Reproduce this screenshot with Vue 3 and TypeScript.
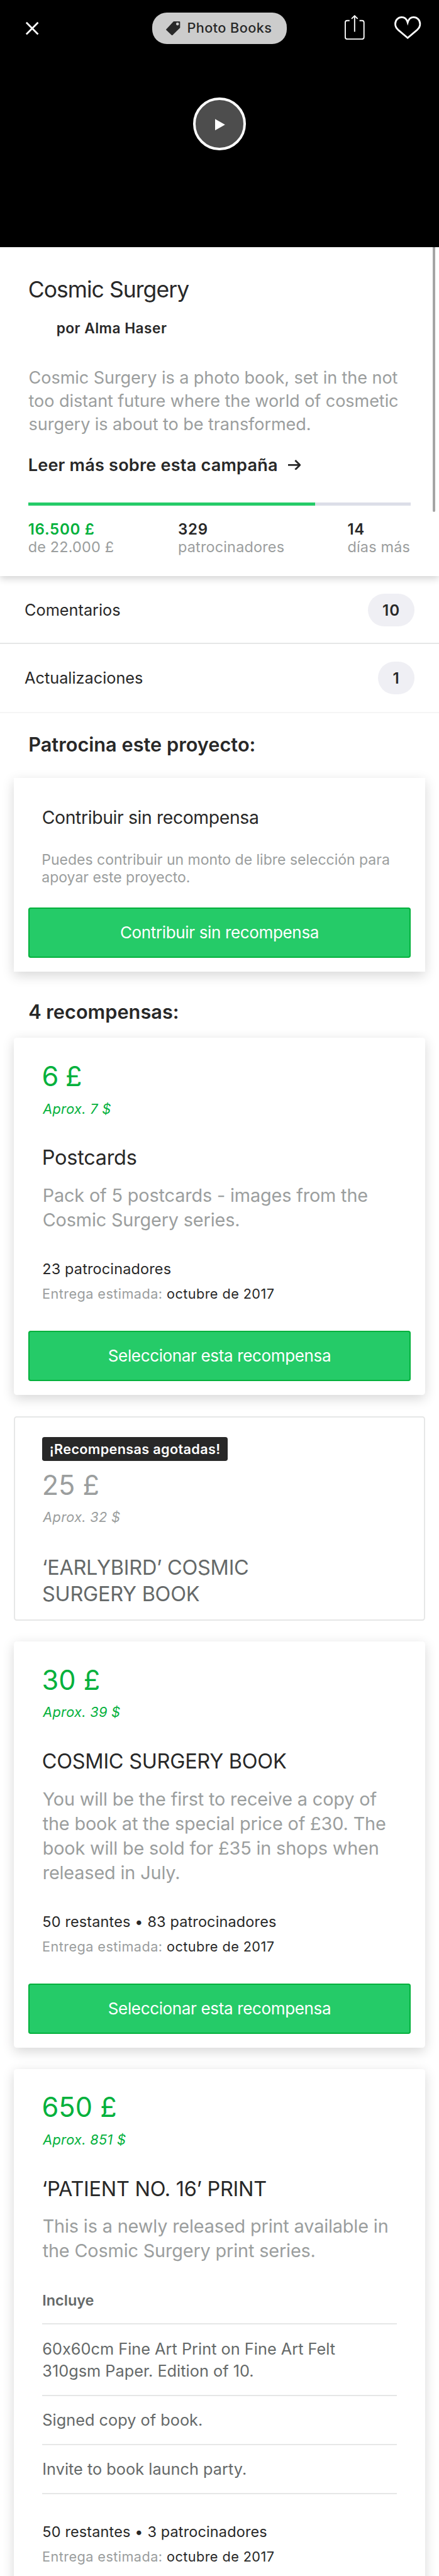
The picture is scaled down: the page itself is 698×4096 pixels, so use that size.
<script setup lang="ts">
interface Reward {
  id: string
  price: string
  approx: string
  title: string[]
  description?: string[]
  includes?: string[][]
  supporters?: string
  delivery?: string
  soldOut?: boolean
  selectable?: boolean
}

const stats = [
  { id: 'pledged', value: '16.500 £', label: 'de 22.000 £' },
  { id: 'count', value: '329', label: 'patrocinadores' },
  { id: 'days', value: '14', label: 'días más' },
]

const progress = 75

const blurb = [
  'Cosmic Surgery is a photo book, set in the not',
  'too distant future where the world of cosmetic',
  'surgery is about to be transformed.',
]

const links = [
  { label: 'Comentarios', count: 10 },
  { label: 'Actualizaciones', count: 1 },
]

const rewards: Reward[] = [
  {
    id: 'postcards',
    price: '6 £',
    approx: 'Aprox. 7 $',
    title: ['Postcards'],
    description: ['Pack of 5 postcards - images from the', 'Cosmic Surgery series.'],
    supporters: '23 patrocinadores',
    delivery: 'octubre de 2017',
    selectable: true,
  },
  {
    id: 'earlybird',
    price: '25 £',
    approx: 'Aprox. 32 $',
    title: ['‘EARLYBIRD’ COSMIC', 'SURGERY BOOK'],
    soldOut: true,
  },
  {
    id: 'book',
    price: '30 £',
    approx: 'Aprox. 39 $',
    title: ['COSMIC SURGERY BOOK'],
    description: [
      'You will be the first to receive a copy of',
      'the book at the special price of £30. The',
      'book will be sold for £35 in shops when',
      'released in July.',
    ],
    supporters: '50 restantes • 83 patrocinadores',
    delivery: 'octubre de 2017',
    selectable: true,
  },
  {
    id: 'print',
    price: '650 £',
    approx: 'Aprox. 851 $',
    title: ['‘PATIENT NO. 16’ PRINT'],
    description: ['This is a newly released print available in', 'the Cosmic Surgery print series.'],
    includes: [
      ['60x60cm Fine Art Print on Fine Art Felt', '310gsm Paper. Edition of 10.'],
      ['Signed copy of book.'],
      ['Invite to book launch party.'],
    ],
    supporters: '50 restantes • 3 patrocinadores',
    delivery: 'octubre de 2017',
  },
]
</script>

<template>
  <main class="page">
    <header class="hero">
      <nav class="toolbar">
        <button class="icon-btn" aria-label="Cerrar">
          <svg class="close" viewBox="0 0 24 24"><path d="M2 2 22 22M22 2 2 22" /></svg>
        </button>
        <span class="pill">
          <svg class="tag" viewBox="0 0 24 24">
            <path
              fill-rule="evenodd"
              d="M12.6.4Q13 0 13.6 0H23q1 0 1 1v9.4q0 .6-.4 1L11 23.6q-.6.7-1.3 0L.4 14.9q-.8-.8 0-1.5ZM19.6 1.9a2.5 2.5 0 1 0 0 5 2.5 2.5 0 0 0 0-5Z"
            />
          </svg>
          <span class="pill-text">Photo Books</span>
        </span>
        <div class="actions">
          <button class="icon-btn" aria-label="Compartir">
            <svg class="share" viewBox="0 0 34 42">
              <path d="M8.4 9.4H4.2Q1 9.4 1 12.6V37.6Q1 41 4.4 41H29.6Q33 41 33 37.6V12.6Q33 9.4 29.8 9.4H25.4" />
              <path d="M17 28.4V1.2M11.8 6.4 17 1.2 22.2 6.4" />
            </svg>
          </button>
          <button class="icon-btn" aria-label="Guardar">
            <svg class="heart" viewBox="0 0 46 39">
              <path d="M23 10.6C21.2 4.4 17.6 1.6 12.8 1.6 6.4 1.6 1.6 6.4 1.6 13.2 1.6 17.4 3.4 20.3 6.4 23.2L23 37.2 39.6 23.2C42.6 20.3 44.4 17.4 44.4 13.2 44.4 6.4 39.6 1.6 33.2 1.6 28.4 1.6 24.8 4.4 23 10.6Z" />
            </svg>
          </button>
        </div>
      </nav>
      <button class="play" aria-label="Reproducir">
        <svg viewBox="0 0 18 20"><path d="M0 0 17.5 10 0 20Z" /></svg>
      </button>
    </header>

    <div class="scrollbar"></div>

    <section class="summary">
      <h1>Cosmic Surgery</h1>
      <p class="author">por Alma Haser</p>
      <p class="blurb">
        <span v-for="line in blurb" :key="line" class="line">{{ line }}</span>
      </p>
      <a class="more">
        <span>Leer más sobre esta campaña</span>
        <svg viewBox="0 0 22 18"><path d="M0 9H20M12.2 1 20.2 9 12.2 17" /></svg>
      </a>
      <div class="progress"><div class="progress-fill" :style="{ width: progress + '%' }"></div></div>
      <dl class="stats">
        <div v-for="s in stats" :key="s.id" :class="s.id">
          <dt>{{ s.value }}</dt>
          <dd>{{ s.label }}</dd>
        </div>
      </dl>
    </section>

    <ul class="links">
      <li v-for="l in links" :key="l.label">
        <span>{{ l.label }}</span>
        <b>{{ l.count }}</b>
      </li>
    </ul>

    <h2 class="back-heading">Patrocina este proyecto:</h2>
    <section class="card no-reward">
      <h3>Contribuir sin recompensa</h3>
      <p>
        <span class="line">Puedes contribuir un monto de libre selección para</span>
        <span class="line">apoyar este proyecto.</span>
      </p>
      <button class="cta">Contribuir sin recompensa</button>
    </section>

    <h2 class="rewards-heading">4 recompensas:</h2>
    <div class="rewards">
      <article v-for="r in rewards" :key="r.id" :class="['card', 'reward', r.id, { 'sold-out': r.soldOut }]">
        <span v-if="r.soldOut" class="flag">¡Recompensas agotadas!</span>
        <p class="price">{{ r.price }}</p>
        <p class="approx">{{ r.approx }}</p>
        <h3 class="title">
          <span v-for="line in r.title" :key="line" class="line">{{ line }}</span>
        </h3>
        <p v-if="r.description" class="desc">
          <span v-for="line in r.description" :key="line" class="line">{{ line }}</span>
        </p>
        <div v-if="r.includes" class="includes">
          <h4>Incluye</h4>
          <ul>
            <li v-for="(item, i) in r.includes" :key="i">
              <span v-for="line in item" :key="line" class="line">{{ line }}</span>
            </li>
          </ul>
        </div>
        <p v-if="r.supporters" class="supporters">{{ r.supporters }}</p>
        <p v-if="r.delivery" class="delivery">
          <span class="muted">Entrega estimada:</span> <span class="date">{{ r.delivery }}</span>
        </p>
        <button v-if="r.selectable" class="cta">Seleccionar esta recompensa</button>
      </article>
    </div>
  </main>
</template>

<style>
html,
body {
  margin: 0;
  background: #fff;
  overflow: hidden;
}
</style>

<style scoped>
.page {
  position: relative;
  box-sizing: border-box;
  zoom: 0.93091;
  width: 749.8px;
  height: 4400px;
  overflow: hidden;
  background: #fff;
  color: #282828;
  font-family: Inter, "Liberation Sans", sans-serif;
  font-weight: 400;
  font-feature-settings: "calt" 0;
  white-space: nowrap;
}
h1, h2, h3, h4, p, ul, dl, dd, dt {
  margin: 0;
  padding: 0;
  font-weight: inherit;
  list-style: none;
}
button {
  font: inherit;
  color: inherit;
  margin: 0;
  padding: 0;
  border: 0;
  background: none;
}
svg {
  display: block;
}
.line {
  display: block;
}

/* Hero */
.hero {
  box-sizing: border-box;
  height: 422px;
  padding-top: 21px;
  background: #000;
  display: flex;
  flex-direction: column;
  align-items: center;
}
.toolbar {
  box-sizing: border-box;
  width: 100%;
  height: 54px;
  padding: 0 30.5px 0 43px;
  display: grid;
  grid-template-columns: 217px 230px 1fr;
  align-items: center;
}
.icon-btn svg {
  fill: none;
  stroke: #fff;
}
.close {
  width: 24px;
  height: 24px;
  stroke-width: 3;
}
.pill {
  box-sizing: border-box;
  height: 54px;
  padding-left: 24px;
  border-radius: 25px;
  background: #ccc;
  display: flex;
  align-items: center;
}
.tag {
  width: 24px;
  height: 24px;
  fill: #282828;
}
.pill-text {
  margin: 1.2px 0 0 11.5px;
  font-size: 23.3px;
  font-weight: 500;
  line-height: 30px;
  letter-spacing: 0.45px;
}
.actions {
  display: flex;
  justify-content: flex-end;
  align-items: center;
  gap: 51px;
}
.share {
  width: 34px;
  height: 42px;
  stroke-width: 2;
  margin-top: -2px;
}
.heart {
  width: 45.5px;
  height: 38.6px;
  stroke-width: 3;
  margin-top: -1.5px;
}
.play {
  box-sizing: border-box;
  width: 91px;
  height: 91px;
  margin-top: 91px;
  border: 4.3px solid #fff;
  border-radius: 50%;
  background: #4d4d4d;
  display: flex;
  align-items: center;
  justify-content: center;
}
.play svg {
  width: 17.5px;
  height: 20px;
  margin: 3px 0 0 3px;
  fill: #fff;
}
.scrollbar {
  position: absolute;
  top: 422px;
  right: 6px;
  width: 5px;
  height: 452px;
  border-radius: 0 0 3px 3px;
  background: #a5a5a5;
}

/* Summary */
.summary {
  box-sizing: border-box;
  height: 562px;
  padding: 49.2px 48px 0;
  box-shadow: 0 4px 12px rgba(0, 0, 0, 0.18);
}
h1 {
  font-size: 38.2px;
  line-height: 48px;
  letter-spacing: -1.05px;
}
.author {
  margin: 26.2px 0 0 48.3px;
  font-size: 24.4px;
  font-weight: 600;
  line-height: 30px;
  letter-spacing: 0.5px;
}
.blurb {
  margin: 49.8px 0 0 1px;
  font-size: 29.1px;
  line-height: 40px;
  letter-spacing: -0.09px;
  color: #9b9e9e;
}
.more {
  margin-top: 31.8px;
  display: flex;
  align-items: center;
  font-size: 29.1px;
  font-weight: 600;
  line-height: 36px;
  letter-spacing: 0.22px;
}
.more svg {
  width: 22px;
  height: 18px;
  margin: -2px 0 0 17.5px;
  fill: none;
  stroke: #282828;
  stroke-width: 3;
}
.progress {
  margin-top: 45px;
  height: 6px;
  background: #dcdee8;
}
.progress-fill {
  height: 6px;
  background: #25cb68;
}
.stats {
  margin-top: 25.4px;
  display: grid;
  grid-template-columns: 256px 289.5px 1fr;
  font-size: 25.2px;
  line-height: 30px;
  letter-spacing: 0.18px;
}
.stats dt {
  font-size: 25.8px;
  font-weight: 600;
  letter-spacing: 0.8px;
}
.stats dd {
  color: #9b9e9e;
}
.stats .pledged dt {
  color: #03b13c;
}

/* Links */
.links li {
  box-sizing: border-box;
  height: 116px;
  padding: 30px 42px 28px;
  border-bottom: 2.15px solid #e6e7e7;
  display: flex;
  align-items: center;
  justify-content: space-between;
  font-size: 27.15px;
}
.links li:last-child {
  height: 118px;
  padding-bottom: 30px;
  border-color: #f5f5f5;
}
.links span {
  padding-top: 1.2px;
}
.links b {
  box-sizing: border-box;
  width: 79px;
  height: 56px;
  border-radius: 28px;
  background: #efeff4;
  font-size: 26px;
  font-weight: 600;
  line-height: 57.4px;
  letter-spacing: 1px;
  text-align: center;
}
.links li:last-child b {
  width: 62px;
}

/* Headings and cards */
h2 {
  padding-left: 48.5px;
  font-size: 33px;
  font-weight: 600;
  line-height: 40px;
}
.back-heading {
  margin-top: 34px;
}
.rewards-heading {
  margin-top: 48px;
}
.card {
  box-sizing: border-box;
  margin: 0 24px;
  background: #fff;
  box-shadow: 0 6px 20px rgba(0, 0, 0, 0.16);
}
.cta {
  box-sizing: border-box;
  display: block;
  width: calc(100% - 48px);
  height: 86px;
  margin: 0 24px;
  padding-top: 1.4px;
  border: 2.15px solid #03b13c;
  border-radius: 4px;
  background: #25cb68;
  color: #fff;
  font-size: 28px;
  line-height: 80px;
  letter-spacing: -0.4px;
  text-align: center;
}
.no-reward {
  margin-top: 36.7px;
  padding: 47.3px 0 24px;
}
.no-reward h3 {
  margin-left: 47.7px;
  font-size: 30.5px;
  line-height: 40px;
  letter-spacing: -0.42px;
}
.no-reward p {
  margin: 38.3px 0 0 47.2px;
  font-size: 24.7px;
  line-height: 30px;
  color: #9b9e9e;
}
.no-reward .cta {
  margin-top: 35.7px;
}
.rewards {
  margin-top: 25px;
  display: flex;
  flex-direction: column;
  gap: 36px;
}
.reward {
  border-radius: 5px;
  padding: 36.9px 0 24px;
}
.reward.print {
  padding-bottom: 160px;
}
.price {
  margin-left: 47.5px;
  font-size: 46.5px;
  line-height: 56px;
  color: #03b13c;
}
.postcards .price {
  letter-spacing: -0.8px;
}
.approx {
  margin: 13.6px 0 0 49.2px;
  font-size: 23.3px;
  font-style: italic;
  line-height: 30px;
  letter-spacing: 0.35px;
  color: #03b13c;
}
.title {
  margin: 46px 0 0 47.8px;
  font-size: 34.9px;
  line-height: 46px;
  letter-spacing: -0.3px;
}
.desc {
  margin: 18.8px 0 0 48.7px;
  font-size: 31px;
  line-height: 42px;
  letter-spacing: -0.17px;
  color: #9b9e9e;
}
.supporters {
  margin: 48.9px 0 0 48.3px;
  font-size: 25.2px;
  line-height: 30px;
  letter-spacing: 0.17px;
}
.delivery {
  margin: 12.8px 0 0 48px;
  font-size: 23.3px;
  line-height: 30px;
  letter-spacing: 0.45px;
}
.muted {
  color: #9b9e9e;
}
.reward .cta {
  margin-top: 47px;
}
.sold-out {
  border: 2.15px solid #e6e7e7;
  box-shadow: none;
  padding: 33.5px 0 19px;
}
.sold-out .price {
  margin: 12.6px 0 0 45.5px;
  color: #9b9e9e;
}
.sold-out .approx {
  margin-left: 47.2px;
  color: #9b9e9e;
}
.sold-out .title {
  margin: 47.4px 0 0 45.8px;
  color: #656969;
}
.flag {
  box-sizing: border-box;
  display: block;
  width: 317px;
  height: 41px;
  padding-left: 12.5px;
  margin-left: 46px;
  border-radius: 4px;
  background: #282828;
  color: #fff;
  font-size: 23.3px;
  font-weight: 600;
  line-height: 41px;
  letter-spacing: 0.34px;
}
.includes {
  margin: 48.9px 48.3px 0;
  color: #656969;
}
.includes h4 {
  padding-bottom: 24.3px;
  border-bottom: 2.15px solid #e6e7e7;
  font-size: 25.2px;
  font-weight: 600;
  line-height: 30px;
}
.includes li {
  padding: 22.95px 0 20.9px;
  border-bottom: 2.15px solid #e6e7e7;
  font-size: 27.15px;
  line-height: 38px;
  letter-spacing: 0.03px;
}
</style>
